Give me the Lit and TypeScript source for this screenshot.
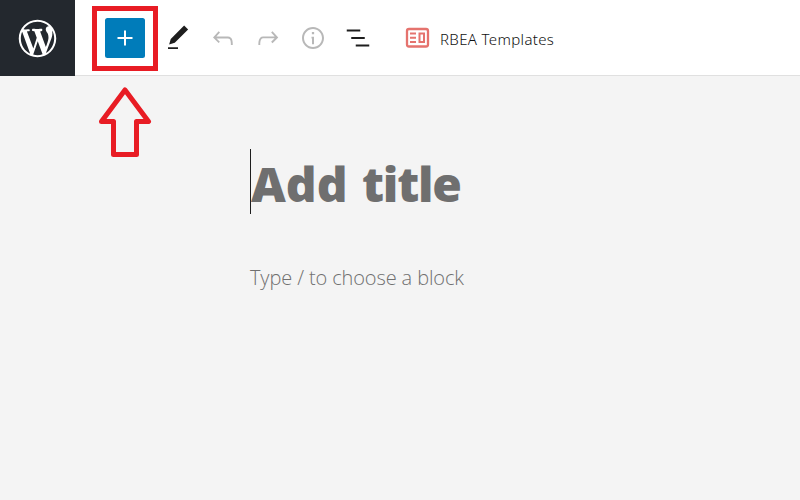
import { LitElement, html, css, svg } from "lit";
import { customElement } from "lit/decorators.js";

const ICONS = {
  plus: "M18 11.2h-5.2V6h-1.6v5.2H6v1.6h5.2V18h1.6v-5.2H18z",
  edit: "M20.1 5.1L16.9 2 6.2 12.7l-1.3 4.4 4.5-1.3L20.1 5.1zM4 20.8h8v-1.5H4v1.5z",
  undo: "M18.3 11.7c-.6-.6-1.4-.9-2.3-.9H6.7l2.9-3.3-1.1-1-4.5 5L8.5 16l1-1-2.7-2.7H16c.5 0 .9.2 1.3.5 1 1 1 3.4 1 4.5v.3h1.5v-.2c0-1.5 0-4.3-1.5-5.7z",
  redo: "M15.6 6.5l-1.1 1 2.9 3.3H8c-.9 0-1.7.3-2.3.9-1.4 1.5-1.4 4.2-1.4 5.6v.2h1.5v-.3c0-1.1 0-3.5 1-4.5.3-.3.7-.5 1.3-.5h9.2L14.5 15l1.1 1.1 4.6-4.6-4.6-5z",
  info: "M12 3.2c-4.8 0-8.8 3.9-8.8 8.8 0 4.8 3.9 8.8 8.8 8.8 4.8 0 8.8-3.9 8.8-8.8 0-4.8-4-8.8-8.8-8.8zm0 16c-4 0-7.2-3.3-7.2-7.2C4.8 8 8 4.8 12 4.8s7.2 3.3 7.2 7.2c0 4-3.2 7.2-7.2 7.2zM11.2 17h1.6v-6h-2v1.3h.4zm-.1-8h1.8V7.2h-1.8z",
  list: "M13.8 5.2H3v1.5h10.8V5.2zm-3.6 12v1.5H21v-1.5H10.2zm7.2-6H6.6v1.5h10.8v-1.5z",
};

const WORDPRESS =
  "M20 10c0-5.51-4.49-10-10-10C4.48 0 0 4.49 0 10c0 5.52 4.48 10 10 10 5.51 0 10-4.48 10-10zM7.78 15.37L4.37 6.22c.55-.02 1.17-.08 1.17-.08.5-.06.44-1.13-.06-1.11 0 0-1.45.11-2.37.11-.18 0-.37 0-.58-.01C4.12 2.69 6.87 1.11 10 1.11c2.33 0 4.45.87 6.05 2.34-.68-.11-1.65.39-1.65 1.58 0 .74.45 1.36.9 2.1.35.61.55 1.36.55 2.46 0 1.49-1.4 5-1.4 5l-3.03-8.37c.54-.02.82-.17.82-.17.5-.05.44-1.25-.06-1.22 0 0-1.44.12-2.38.12-.87 0-2.33-.12-2.33-.12-.5-.03-.56 1.2-.06 1.22l.92.08 1.26 3.41zM17.41 10c.24-.64.74-1.87.43-4.25.7 1.29 1.05 2.71 1.05 4.25 0 3.29-1.73 6.24-4.4 7.78.97-2.59 1.94-5.2 2.92-7.78zM6.1 18.09C3.12 16.65 1.11 13.53 1.11 10c0-1.3.23-2.48.72-3.59C3.25 10.3 4.67 14.2 6.1 18.09zm4.03-6.63l2.58 6.98c-.86.29-1.76.45-2.71.45-.79 0-1.57-.11-2.29-.33.81-2.38 1.62-4.74 2.42-7.1z";

const icon = (name: keyof typeof ICONS) =>
  html`<svg class="icon" viewBox="0 0 24 24">${svg`<path d=${ICONS[name]} />`}</svg>`;

@customElement("app-root")
export class AppRoot extends LitElement {
  static styles = css`
    :host {
      display: flex;
      flex-direction: column;
      position: relative;
      width: 800px;
      height: 500px;
      overflow: hidden;
      background: #f4f4f4;
      font-family: "Open Sans", "Noto Sans", sans-serif;
    }
    * {
      box-sizing: border-box;
    }
    svg {
      display: block;
      flex: none;
    }
    button {
      border: 0;
      padding: 0;
      margin: 0;
      background: none;
      font: inherit;
      color: inherit;
    }
    .bar {
      display: flex;
      flex: none;
      height: 76px;
      background: #fff;
      border-bottom: 1px solid #e0e0e0;
    }
    .logo {
      display: flex;
      align-items: center;
      justify-content: center;
      flex: none;
      width: 75px;
      height: 76px;
      background: #23282e;
      fill: #fff;
    }
    .logo svg {
      width: 45px;
      height: 45px;
    }
    .tools {
      display: flex;
      align-items: center;
      gap: 15px;
      height: 76px;
      padding-left: 30px;
    }
    .icon {
      width: 30px;
      height: 30px;
      fill: currentColor;
    }
    .tool {
      color: #1e1e1e;
    }
    .muted {
      color: #b8b8b8;
    }
    .add {
      display: flex;
      align-items: center;
      justify-content: center;
      width: 40px;
      height: 40px;
      margin-right: 3px;
      border-radius: 2.5px;
      background: #007cba;
      color: #fff;
    }
    .templates {
      display: flex;
      align-items: center;
      margin-left: 17px;
      color: #1e1e1e;
    }
    .label {
      margin: 2px 0 0 10px;
      font-family: "Noto Sans", "Open Sans", sans-serif;
      font-size: 15px;
      font-weight: 350;
      letter-spacing: 0.35px;
      line-height: 20px;
      white-space: nowrap;
      color: #111;
    }
    .editor {
      display: flex;
      flex-direction: column;
      align-items: flex-start;
      padding: 73px 0 0 250px;
    }
    .title {
      margin: 0;
      height: 65px;
      border-left: 1px solid #1e1e1e;
      color: #6f6f6f;
      font-family: "Noto Sans", "Open Sans", sans-serif;
      font-size: 48px;
      font-weight: 900;
      line-height: 70px;
      word-spacing: 2px;
      white-space: nowrap;
    }
    .tight {
      letter-spacing: -1.3px;
    }
    .prompt {
      margin: 50px 0 0;
      color: #707070;
      font-size: 20px;
      font-weight: 350;
      letter-spacing: -0.12px;
      line-height: 28px;
      white-space: nowrap;
    }
    .frame {
      position: absolute;
      left: 92px;
      top: 6px;
      width: 66px;
      height: 65px;
      border: 5px solid #e81c24;
      pointer-events: none;
    }
    .arrow {
      position: absolute;
      left: 95px;
      top: 82px;
      pointer-events: none;
    }
  `;

  render() {
    return html`
      <header class="bar">
        <div class="logo">
          <svg viewBox="-2 -2 24 24"><path d=${WORDPRESS} /></svg>
        </div>
        <div class="tools">
          <button class="add" aria-label="Add block">${icon("plus")}</button>
          <button class="tool" aria-label="Tools">${icon("edit")}</button>
          <button class="muted" aria-label="Undo">${icon("undo")}</button>
          <button class="muted" aria-label="Redo">${icon("redo")}</button>
          <button class="muted" aria-label="Details">${icon("info")}</button>
          <button class="tool" aria-label="List view">${icon("list")}</button>
          <button class="templates">
            <svg width="25" height="22" viewBox="0 0 25 22" fill="none" stroke="#e5736e" stroke-width="2">
              <rect x="2" y="2" width="21" height="17.5" rx="2" stroke-width="2.3" />
              <path d="M5 6.5h6M5 10.7h6M5 15h6" />
              <rect x="14.5" y="6.5" width="4.5" height="8.5" />
            </svg>
            <span class="label">RBEA Templates</span>
          </button>
        </div>
      </header>
      <main class="editor">
        <h1 class="title">Add <span class="tight">title</span></h1>
        <p class="prompt">Type / to choose a block</p>
      </main>
      <div class="frame"></div>
      <svg class="arrow" width="60" height="80" viewBox="95 82 60 80">
        <path
          d="M125 90L148.5 121.5H136.5V154.5H113.5V121.5H101.5Z"
          fill="none"
          stroke="#e81c24"
          stroke-width="5"
          stroke-linejoin="round"
        />
      </svg>
    `;
  }
}
